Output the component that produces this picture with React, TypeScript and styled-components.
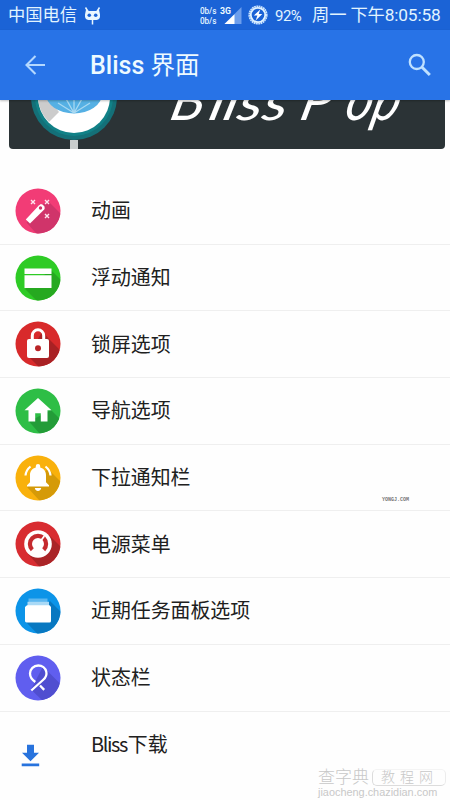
import React from 'react';
import styled, { createGlobalStyle } from 'styled-components';

const Global = createGlobalStyle`
  * { box-sizing: border-box; }
  body { margin: 0; background: #fefefe; font-family: Roboto, "Noto Sans CJK SC", sans-serif; }
`;

const Screen = styled.div`
  position: relative;
  width: 450px;
  height: 800px;
  overflow: hidden;
  background: #fefefe;
  color: #202020;
`;

const StatusBar = styled.header`
  display: flex;
  align-items: center;
  height: 30px;
  padding: 0 10px 0 8px;
  background: #1b63d6;
  color: #e2f4ff;
  white-space: nowrap;
`;

const Carrier = styled.span`
  width: 69px;
  margin-right: 7px;
  font-size: 17.3px;
  line-height: 28px;
`;

const Speeds = styled.div`
  width: 16px;
  margin-left: auto;
  margin-right: 3px;
  padding-top: 1px;
  font-size: 8.2px;
  font-weight: 500;
  line-height: 10px;
  letter-spacing: -0.1px;
`;

const Battery = styled.span`
  width: 28px;
  margin: 1px 9px 0 7px;
  font-size: 15px;
  letter-spacing: -0.5px;
`;

const Clock = styled.span`
  width: 128px;
  font-size: 17.3px;
  line-height: 28px;
  letter-spacing: -0.15px;
`;

const AppBar = styled.nav`
  position: relative;
  display: flex;
  align-items: center;
  height: 70px;
  padding: 0 17px 0 21px;
  background: #2873e7;
  box-shadow: 0 1px 2px rgba(0, 0, 0, 0.25);
`;

const Title = styled.h1`
  flex: 1;
  margin: 2px 0 0 41px;
  color: #eefaff;
  font-size: 25px;
  font-weight: 500;
  line-height: 36px;

  span { font-size: 24.5px; font-weight: 400; }
`;

const Banner = styled.div`
  height: 49px;
  margin: 0 5px 0 9px;
  border-radius: 0 0 4px 4px;
  background: #2b3336;
  overflow: hidden;

  svg { display: block; }
`;

const List = styled.ul`
  margin: 29px 0 0;
  padding: 0;
  list-style: none;
`;

const Row = styled.li<{ $last?: boolean }>`
  display: flex;
  align-items: center;
  height: 66.7px;
  padding-left: 15px;
  border-bottom: ${(p) => (p.$last ? '0' : '1px solid #efefef')};
`;

const IconSlot = styled.div<{ $low?: boolean }>`
  display: flex;
  width: 76px;
  padding-top: ${(p) => (p.$low ? '22px' : '0')};
`;

const Label = styled.span`
  padding-top: 3px;
  margin-bottom: 4px;
  font-family: "Noto Sans CJK SC", sans-serif;
  font-size: 19.9px;
  line-height: 30px;
`;

const Latin = styled.span`
  letter-spacing: -1.4px;
  margin-right: 1px;
`;

const SiteMark = styled.div`
  position: absolute;
  right: 4px;
  bottom: 0;
  width: 128px;
  color: #c8c8c8;
`;

const MarkTop = styled.div`
  display: flex;
  align-items: center;
  height: 17px;
  font-size: 17px;
  line-height: 17px;
  font-weight: 300;
`;

const MarkBox = styled.span`
  flex: 1;
  height: 17px;
  margin-left: 3px;
  padding-left: 8px;
  border: 1px solid #dcdcdc;
  border-top-color: #f4f4f4;
  border-right-color: #ececec;
  border-radius: 5px;
  font-size: 14px;
  letter-spacing: 5px;
  line-height: 14px;
`;

const MarkUrl = styled.div`
  height: 14px;
  font-family: "Liberation Sans", sans-serif;
  font-size: 10.9px;
  line-height: 13px;
  white-space: nowrap;
`;

const TinyMark = styled.div`
  position: absolute;
  left: 382px;
  top: 497px;
  color: #777;
  font: bold 5px/7px "Liberation Mono", monospace;
  white-space: nowrap;
`;

type BadgeProps = { color: string; shade: string; shadow: string; children: React.ReactNode };

/* Round badge with the long diagonal shadow of its symbol. */
const Badge = ({ color, shade, shadow, children }: BadgeProps) => {
  const id = 'disc' + color.slice(1) + shade.slice(1);
  return (
    <svg width="46" height="46" viewBox="0 0 46 46">
      <clipPath id={id}><circle cx="23" cy="23" r="22.5" /></clipPath>
      <circle cx="23" cy="23" r="22.5" fill={color} />
      <path d={shadow} fill={shade} clipPath={`url(#${id})`} />
      {children}
    </svg>
  );
};

const Wand = () => (
  <Badge color="#f23c76" shade="#d0346a" shadow="M11.5 34.5 25 18l8-5 20 20v20H28Z">
    <path d="m10.800 31.600 13-14 2.100-1.500q2.200.1 3.500 2.300.8 1.700-.2 3.100L15 35.600Z" fill="#fff" />
    <circle cx="25.500" cy="20" r="1.700" fill="#d0346a" />
    <path d="m16 12 4 4m0-4-4 4m14-4 4 4m0-4-4 4m0 10 4 4m0-4-4 4" stroke="#ffe5ef" strokeWidth="1.400" />
  </Badge>
);

const Cards = () => (
  <Badge color="#2ecb25" shade="#26a920" shadow="M10 34 36 15l20 20v25H36Z">
    <path d="M9.500 13.500h27v5.500h-27zM9.500 20.200h27v12.800h-27z" fill="#fff" />
  </Badge>
);

const Lock = () => (
  <Badge color="#d82a2b" shade="#a92124" shadow="m12.500 34.500 15-24L34 18l20 20v20H36Z">
    <path d="M17.300 19v-4.500a5.700 5.700 0 0 1 11.400 0V19" fill="none" stroke="#fff" strokeWidth="3" />
    <rect x="12" y="18" width="22" height="19" rx="2" fill="#fff" />
    <circle cx="23" cy="27.300" r="3" fill="#b92427" />
  </Badge>
);

const Home = () => (
  <Badge color="#2ebe46" shade="#239c38" shadow="M14 33.500 36 22l20 20v20H39Z">
    <path d="m23 10 13.500 12.200h-4v11.300h-6.700v-8.300h-5.600v8.300h-6.700V22.200h-4Z" fill="#fff" />
  </Badge>
);

const Bell = () => (
  <Badge color="#f9b10c" shade="#d59a08" shadow="m12 32 21-18 23 23v20H35Z">
    <path d="M12 31.500v-1.200l3-3v-7.100c0-4.200 2.200-7 5.800-7.800v-1.300a2.200 2.200 0 0 1 4.400 0v1.300c3.600.8 5.800 3.600 5.800 7.800v7.100l3 3v1.200ZM19.800 33h6.400c-.5 2.200-1.700 3-3.200 3s-2.700-.8-3.200-3Z" fill="#fff" />
    <path d="M15.500 11.500Q11 15 10.500 20.500m20-9q4.500 3.500 5 9" fill="none" stroke="#fff" strokeWidth="2.200" />
  </Badge>
);

const Gauge = () => (
  <Badge color="#d82c31" shade="#aa2427" shadow="m13 33 20-20 25 25v25H40Z">
    <circle cx="23" cy="23" r="13.800" fill="#fff" />
    <path d="M17.300 28.700a8.100 8.100 0 1 1 11.400 0" fill="none" stroke="#c52a2e" strokeWidth="4.200" />
    <path d="m23.500 23 5.800-8" stroke="#fff" strokeWidth="1.800" />
  </Badge>
);

const Recents = () => (
  <Badge color="#0c94e8" shade="#0878c1" shadow="m11 34 24-21 21 21v25H35Z">
    <path d="M13.500 10.500h19V18h-19z" fill="#5db7ef" />
    <path d="M12.500 13.800H34V20H12.500z" fill="#a9d9f6" />
    <path d="M12 17.200h22.500l1.500 1.700v14q0 1.500-1.500 1.500h-23Q10 34.400 10 33V19Z" fill="#fff" />
  </Badge>
);

const Ribbon = () => (
  <Badge color="#605eef" shade="#504ed0" shadow="m16 34.500 12-23 28 28v20H42Z">
    <path d="M16.300 35.500 28 25c3.100-2.700 4-5.200 3.300-8.300-.9-3.700-4.200-6.200-8-6.200-4.700 0-8.300 3.600-8.300 8.100 0 3.300 2 6.200 5.300 8.400m4.700 3.500 4.200 4.400" fill="none" stroke="#fff" strokeWidth="2.300" />
  </Badge>
);

const Download = () => (
  <svg width="31" height="24" viewBox="0 0 31 24">
    <path d="M12 .8h7v8h5l-8.500 8.500L7 8.800h5ZM6.700 19.500h17.500v2.800H6.700z" fill="#2873dd" />
  </svg>
);

const MascotSvg = styled.svg`
  margin-top: 1px;
`;

const Mascot = () => (
  <MascotSvg width="17" height="20" viewBox="0 0 17 20">
    <path d="M1.500 1.500 4 5.500m11.500-4-2.500 4M8.500 13v5.500" fill="none" stroke="#e8f6ff" strokeWidth="1.500" />
    <path d="M2 3.800 4.500 5h8L15 3.800 16 8.500q.5 5-3.500 5.500h-8Q.5 13.500 1 8.500Z" fill="#e8f6ff" />
    <circle cx="5.300" cy="9.200" r="1.800" fill="#1b63d6" />
    <circle cx="11.700" cy="9.200" r="1.800" fill="#1b63d6" />
  </MascotSvg>
);

const Signal = () => (
  <svg width="24" height="24" viewBox="0 0 24 24">
    <path d="M22.500 4v17h-17Z" fill="#6d9eec" />
    <path d="M15.500 11.200V21H5.500Z" fill="#fff" />
    <text x="1" y="10.800" fill="#eefaff" fontFamily="Roboto" fontSize="9.800" fontWeight="700" textLength="11" lengthAdjust="spacingAndGlyphs">3G</text>
  </svg>
);

const ChargeSvg = styled.svg`
  margin-left: 5px;
`;

const Charge = () => (
  <ChargeSvg width="20" height="20" viewBox="0 0 20 20">
    <circle cx="10" cy="10" r="8.700" fill="none" stroke="#c9e3ff" strokeWidth="1.800" strokeDasharray="1.800 .5" />
    <circle cx="10" cy="10" r="7.200" fill="none" stroke="#e2f4ff" strokeWidth="1.800" />
    <path d="m12.300 4.500-6.500 6h3.600l-1.700 5 6.600-6.400h-3.600Z" fill="#fff" />
  </ChargeSvg>
);

const BackArrow = () => (
  <svg width="28" height="28" viewBox="0 0 28 28">
    <path d="M24 14H6m8.500-9L5.500 14l9 9" fill="none" stroke="#b4d8ff" strokeWidth="2.100" />
  </svg>
);

const Search = () => (
  <svg width="26" height="26" viewBox="0 0 26 26">
    <circle cx="9.800" cy="10" r="7" fill="none" stroke="#bfe1ff" strokeWidth="2.300" />
    <path d="m14.800 15 8 8" stroke="#bfe1ff" strokeWidth="3" />
  </svg>
);

const Artwork = () => (
  <svg width="436" height="49" viewBox="9 100 436 49">
    <circle cx="74" cy="97" r="43" fill="#147078" />
    <circle cx="74" cy="97" r="39" fill="#118187" />
    <circle cx="74" cy="97" r="36" fill="#fff" />
    <path d="M38 97A36 36 0 0 0 49 122L59 112 48 98Z" fill="#ccc" />
    <ellipse cx="74" cy="94" rx="28" ry="19.500" fill="#55b0e4" />
    <path d="M74 90v23M74 113 65 97m9 16 9-16m-9 16L58 103m16 10 16-10" fill="none" stroke="#a7d8f1" strokeWidth="1.300" />
    <path d="M70 140h8v9h-8z" fill="#c9cdcd" />
    <g fill="#fff" fontFamily="Lato, sans-serif" fontStyle="italic" fontSize="50" transform="translate(0 120) skewX(-14)">
      <text x="168" y="0" fontSize="56">B</text>
      <text x="207" y="0" textLength="78" lengthAdjust="spacingAndGlyphs">liss</text>
      <text x="298" y="0" fontSize="56">P</text>
      <text x="343" y="0" fontSize="60" textLength="54" lengthAdjust="spacingAndGlyphs">op</text>
    </g>
  </svg>
);

const items = [
  { label: '动画', Icon: Wand },
  { label: '浮动通知', Icon: Cards },
  { label: '锁屏选项', Icon: Lock },
  { label: '导航选项', Icon: Home },
  { label: '下拉通知栏', Icon: Bell },
  { label: '电源菜单', Icon: Gauge },
  { label: '近期任务面板选项', Icon: Recents },
  { label: '状态栏', Icon: Ribbon },
  { latin: 'Bliss', label: '下载', Icon: Download },
];

export default function App() {
  return (
    <Screen>
      <Global />
      <StatusBar>
        <Carrier>中国电信</Carrier>
        <Mascot />
        <Speeds><div>0b/s</div><div>0b/s</div></Speeds>
        <Signal />
        <Charge />
        <Battery>92%</Battery>
        <Clock>周一 下午8:05:58</Clock>
      </StatusBar>
      <AppBar>
        <BackArrow />
        <Title>Bliss <span>界面</span></Title>
        <Search />
      </AppBar>
      <Banner><Artwork /></Banner>
      <List>
        {items.map(({ latin, label, Icon }, i) => (
          <Row key={label} $last={i === items.length - 1}>
            <IconSlot $low={i === items.length - 1}><Icon /></IconSlot>
            <Label>{latin && <Latin>{latin}</Latin>}{label}</Label>
          </Row>
        ))}
      </List>
      <TinyMark>YONGJ.COM</TinyMark>
      <SiteMark>
        <MarkTop>查字典<MarkBox>教程网</MarkBox></MarkTop>
        <MarkUrl>jiaocheng.chazidian.com</MarkUrl>
      </SiteMark>
    </Screen>
  );
}
